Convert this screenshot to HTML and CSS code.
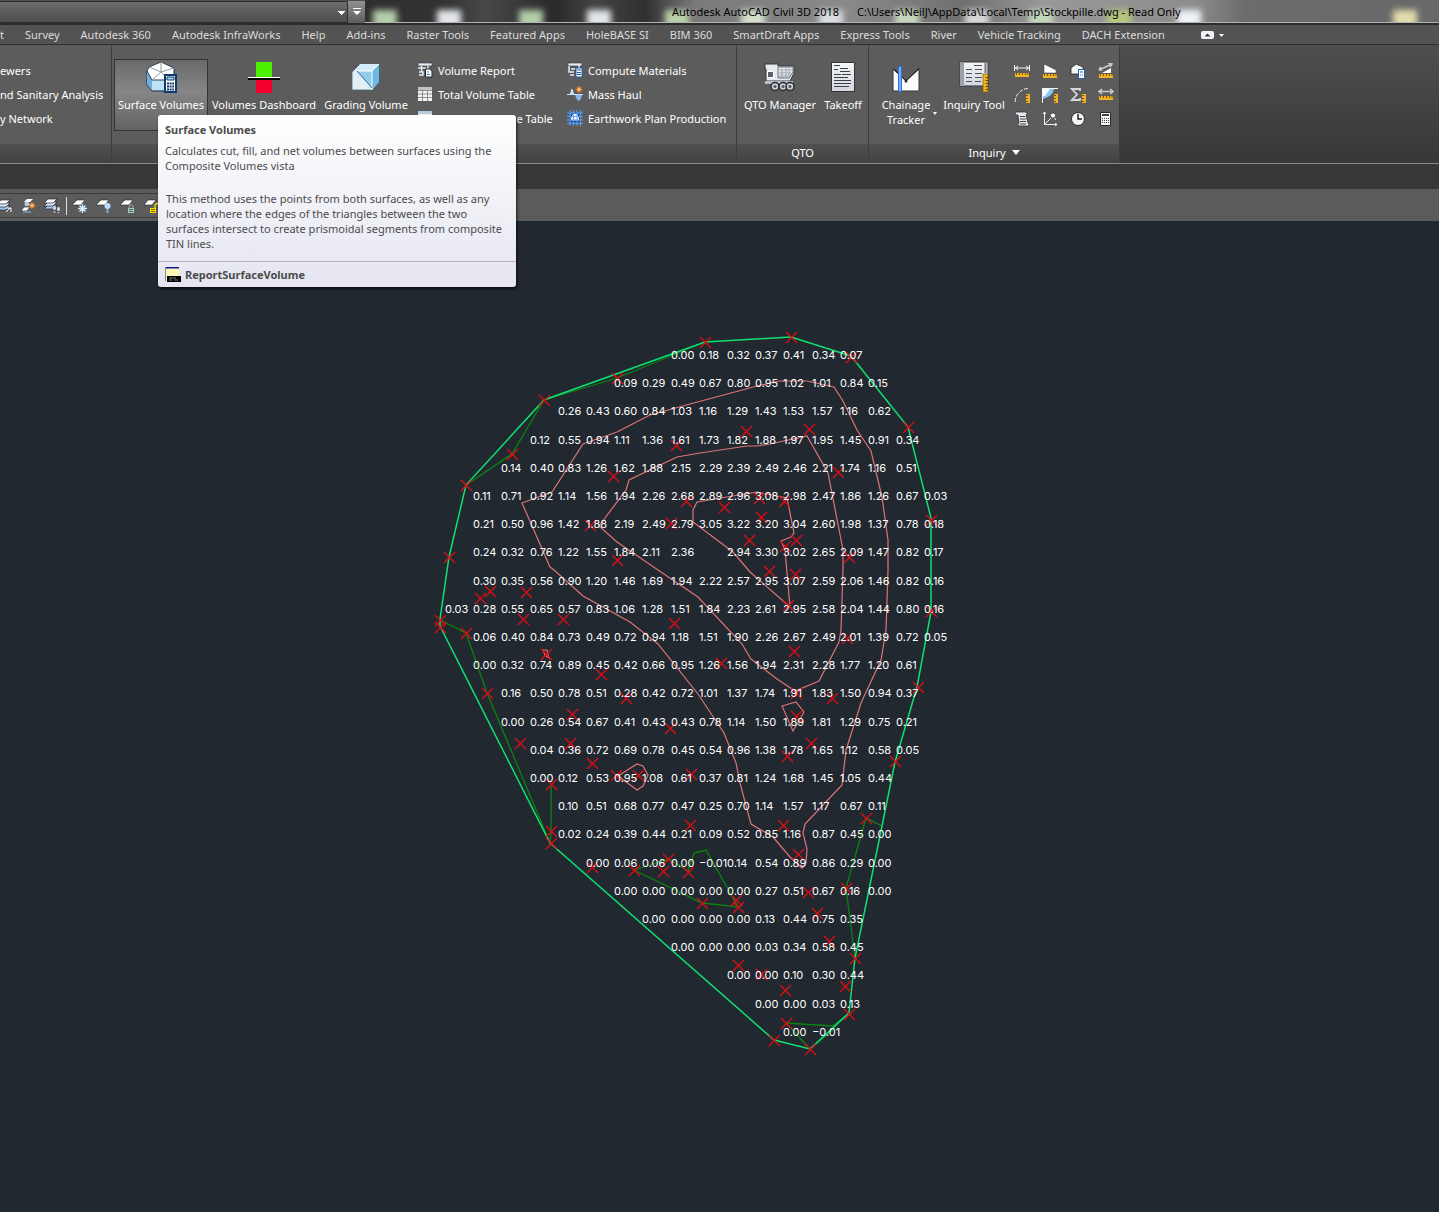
FILE: index.html
```html
<!DOCTYPE html>
<html lang="en">
<head>
  <meta charset="UTF-8" />
  <meta name="viewport" content="width=device-width, initial-scale=1.0"/>
  <title>Autodesk AutoCAD Civil 3D 2018</title>
  <link rel="stylesheet" href="styles.css">
</head>
<body>

  <svg class="defs" aria-hidden="true">
    <defs>
      <linearGradient id="paper" x1="0" y1="0" x2="0" y2="1">
        <stop offset="0" stop-color="#f4f5f7"/><stop offset="1" stop-color="#d2d6dc"/>
      </linearGradient>
      <linearGradient id="ice" x1="0" y1="0" x2="1" y2="1">
        <stop offset="0" stop-color="#e9f6fc"/><stop offset="1" stop-color="#6db7de"/>
      </linearGradient>
      <symbol id="ruler" viewBox="0 0 14 4">
        <path d="M0 0h14v4H0z" fill="#f0b323"/>
        <path d="M1.5 0v2M4.5 0v2M7.5 0v2M10.5 0v2M13 0v2" stroke="#7a5200"/>
      </symbol>
      <symbol id="ruler-v" viewBox="0 0 4 9">
        <path d="M0 0h4v9H0z" fill="#f0b323"/>
        <path d="M0 1.5h2M0 4.5h2M0 7.5h2" stroke="#7a5200"/>
      </symbol>
      <symbol id="layers" viewBox="0 0 16 16">
        <path d="M5 8h9l-4 4H1z" fill="#9cc4f5" stroke="#1c2738" stroke-width=".7"/>
        <path d="M5 5h9l-4 4H1z" fill="#dfe6ef" stroke="#1c2738" stroke-width=".7"/>
        <path d="M5 2h9l-4 4H1z" fill="#fff" stroke="#1c2738" stroke-width=".7"/>
      </symbol>
    </defs>
  </svg>

  <header class="titlebar">
    <select class="workspace" aria-label="Workspace"></select>
    <button class="customize" aria-label="Customize">
      <svg width="10" height="10" viewBox="0 0 10 10"><path d="M1 1.5h8" stroke="#fff"/><path d="M1 4h8L5 8z" fill="#fff"/></svg>
    </button>
    <div class="glass">
      <svg class="reflections" aria-hidden="true">
        <g id="blobs"></g>
      </svg>
      <div class="caption"><span>Autodesk AutoCAD Civil 3D 2018</span><span>C:\Users\NeilJ\AppData\Local\Temp\Stockpille.dwg - Read Only</span></div>
    </div>
  </header>

  <nav class="tabs">
    <a href="#" class="cut">t</a>
    <a href="#">Survey</a>
    <a href="#">Autodesk 360</a>
    <a href="#">Autodesk InfraWorks</a>
    <a href="#">Help</a>
    <a href="#">Add-ins</a>
    <a href="#">Raster Tools</a>
    <a href="#">Featured Apps</a>
    <a href="#">HoleBASE SI</a>
    <a href="#">BIM 360</a>
    <a href="#">SmartDraft Apps</a>
    <a href="#">Express Tools</a>
    <a href="#">River</a>
    <a href="#">Vehicle Tracking</a>
    <a href="#">DACH Extension</a>
    <button class="minimize" aria-label="Minimize ribbon">
      <svg width="26" height="10" viewBox="0 0 26 10">
        <rect x="1" y="1" width="13" height="8" rx="2" fill="#f2f4fa"/>
        <path d="M4.5 6.5h6l-3-3z" fill="#333"/>
        <path d="M19 4h5l-2.5 3z" fill="#fff"/>
      </svg>
    </button>
  </nav>

  <section class="ribbon">
    <div class="panel panel-first">
      <div class="panel-body">
        <div class="rows">
          <button class="row">ewers</button>
          <button class="row">nd Sanitary Analysis</button>
          <button class="row">y Network</button>
        </div>
      </div>
      <div class="panel-title"></div>
    </div>

    <div class="panel panel-volumes">
      <div class="panel-body">
        <button class="big active">
          <svg width="32" height="32" viewBox="0 0 32 32">
            <path d="M2 10v14l5 6h17l5-5V9z" fill="url(#ice)" stroke="#1c3350"/>
            <path d="M7 19h17v10H7z" fill="#bfe2f4"/>
            <path d="M2 10v13l5 6V19z" fill="#6eb0da"/>
            <path d="M2 10l2-4 12-5 13 6v9l-5 3H7z" fill="#fff" stroke="#29415f"/>
            <path d="M16 11L4 6M16 11L7 19M16 11l8 8M16 11l13-4M16 11V1" stroke="#999" fill="none"/>
            <path d="M20 14h11v17H20z" fill="#fff" stroke="#123a6b" stroke-width="2"/>
            <path d="M22 16h7v3h-7z" fill="#a8d8f0" stroke="#123a6b"/>
            <path d="M22 22.5h7M22 25.5h7M22 28.5h7" stroke="#123a6b" stroke-width="2" stroke-dasharray="2 .6"/>
          </svg>
          <span>Surface Volumes</span>
        </button>
        <button class="big wide">
          <svg width="32" height="32" viewBox="0 0 32 32">
            <path d="M8 1h16v15H8z" fill="#4df000"/>
            <path d="M8 19h16v13H8z" fill="#f4002c"/>
            <path d="M0 16h32v1H0z" fill="#fff"/>
            <path d="M0 17h32v2H0z" fill="#000"/>
          </svg>
          <span>Volumes Dashboard</span>
        </button>
        <button class="big">
          <svg width="32" height="32" viewBox="0 0 32 32">
            <path d="M2 11l8-8h19v18l-7 8H2z" fill="#e2eef5" stroke="#46667c" stroke-width=".8"/>
            <path d="M10 3h19l-7 7H7z" fill="#d3edfa"/>
            <path d="M22 10l7-7v18l-7 8z" fill="#69b9e2"/>
            <path d="M7 10h15v17z" fill="#90cdee"/>
            <path d="M7 10h15v19M22 10l7-7" stroke="#fff" fill="none"/>
            <path d="M7 10l15 17" stroke="#386b8e" fill="none"/>
          </svg>
          <span>Grading Volume</span>
        </button>
        <div class="rows reports">
          <button class="row">
            <svg width="16" height="16" viewBox="0 0 16 16">
              <path d="M1 1h14v3H1z" fill="#e8ebf0" stroke="#1d2b3c" stroke-width=".6"/>
              <path d="M1 6h8M4.5 4v6M2 10h4v3H2M11 4v3" stroke="#e8ebf0" stroke-width="1.5" fill="none"/>
              <path d="M8.5 7h4l2.500 2v6H8.5z" fill="#fff" stroke="#1d2b3c"/>
              <path d="M10 10h2M10 12.5h3" stroke="#3b74b8"/>
            </svg>
            <span>Volume Report</span>
          </button>
          <button class="row">
            <svg width="16" height="16" viewBox="0 0 16 16">
              <path d="M1 1h14v14H1z" fill="#f3f3f3"/><path d="M1 1h14v3H1z" fill="#bfc3ca"/>
              <path d="M1 4.5h14M1 8h14M1 11.5h14M5.5 4v11M10.5 4v11" stroke="#777" stroke-width=".8"/>
            </svg>
            <span>Total Volume Table</span>
          </button>
          <button class="row">
            <svg width="16" height="16" viewBox="0 0 16 16">
              <path d="M1 1h14v14H1z" fill="#f3f3f3"/><path d="M1 1h14v3H1z" fill="#b5cbdc"/>
            </svg>
            <span>Material Volume Table</span>
          </button>
        </div>
        <div class="rows materials">
          <button class="row">
            <svg width="16" height="16" viewBox="0 0 16 16">
              <path d="M1 1h14v3H1z" fill="#e8ebf0" stroke="#1d2b3c" stroke-width=".6"/>
              <path d="M2 4v6h5M4 7h4M3 13h4M12 3v3" stroke="#e8ebf0" stroke-width="1.5" fill="none"/>
              <path d="M9 6h6v9H9z" fill="#fff" stroke="#1f5ea8"/>
              <path d="M10 8h4M10 10.5h4M10 12.5h4" stroke="#1f5ea8"/>
            </svg>
            <span>Compute Materials</span>
          </button>
          <button class="row">
            <svg width="16" height="16" viewBox="0 0 16 16">
              <path d="M1 9q3-1 3-5 1-2 2 0 0 4 3 5z" fill="#d3e2f5"/>
              <path d="M8 9h7q-1 5-3 6-2 0-4-6z" fill="#8db4e6"/>
              <path d="M0 8.5h16" stroke="#cfe0f5"/>
              <path d="M12 0v7M8.5 3.5h7M9.5 1l5 5M14.5 1l-5 5" stroke="#ff7a1a"/>
              <circle cx="12" cy="3.5" r="2" fill="#ffb14d"/>
            </svg>
            <span>Mass Haul</span>
          </button>
          <button class="row">
            <svg width="16" height="16" viewBox="0 0 16 16">
              <path d="M2 2h12v12H2z" fill="#2c6fc4"/>
              <path d="M3 11q1-8 5-8t5 8z" fill="#f4f8ff" stroke="#0f2950"/>
              <path d="M3 0v16M6.5 0v16M10 0v16M13.5 0v16M0 3h16M0 6.5h16M0 10h16M0 13.5h16" stroke="#5d9ff0" stroke-width=".9"/>
            </svg>
            <span>Earthwork Plan Production</span>
          </button>
        </div>
      </div>
      <div class="panel-title"></div>
    </div>

    <div class="panel panel-qto">
      <div class="panel-body">
        <button class="big qto">
          <svg width="32" height="32" viewBox="0 0 32 32">
            <path d="M1 3h13v2h16v7l-4 8H2V8H1z" fill="#e6e9ee" stroke="#32363d"/>
            <path d="M3.5 10.5h6v6h-6z" fill="#59626e" stroke="#fff"/>
            <path d="M14 6h15v5l-4 6H14z" fill="url(#paper)" stroke="#6a707a"/>
            <path d="M15 9h13M15 12h12M15 15h10M18 7v9M22 7v9M25 7v8" stroke="#8b929d" stroke-width=".7"/>
            <path d="M1 20h28v3H1z" fill="#b7bdc6"/>
            <g fill="#c9ced6" stroke="#25282d" stroke-width="1.5"><circle cx="11" cy="25.5" r="4"/><circle cx="19" cy="25.5" r="4"/><circle cx="26" cy="25.5" r="4"/></g>
            <g fill="#555"><circle cx="11" cy="25.5" r="1.5"/><circle cx="19" cy="25.5" r="1.5"/><circle cx="26" cy="25.5" r="1.5"/></g>
          </svg>
          <span>QTO Manager</span>
        </button>
        <button class="big takeoff">
          <svg width="32" height="32" viewBox="0 0 32 32">
            <path d="M4.5 1.5h23v29h-23z" fill="url(#paper)" stroke="#30343a"/>
            <path d="M7 4.5h6M7 8.5h4M13 7.5h8M13 10.5h10M7 13.5h7M15 13.5h9M7 16.5h14M7 19.5h17M7 22.5h17M7 25.5h15" stroke="#3b4047"/>
          </svg>
          <span>Takeoff</span>
        </button>
      </div>
      <div class="panel-title">QTO</div>
    </div>

    <div class="panel panel-inquiry">
      <div class="panel-body">
        <button class="big chainage">
          <svg width="32" height="32" viewBox="0 0 32 32">
            <path d="M3 30V8l13 12L29 7v23z" fill="#fbfbfb" stroke="#31353b"/>
            <path d="M4 8l5 5M12 16l4 4L29 8" stroke="#1a1a1a" fill="none"/>
            <circle cx="16" cy="20" r="1.5" fill="#222"/>
            <path d="M8 5h4v26H8z" fill="#2a70e0"/><path d="M9.5 6h1v24h-1z" fill="#d8e8ff"/>
          </svg>
          <span>Chainage<br>Tracker</span>
          <i class="drop"></i>
        </button>
        <button class="big inquiry">
          <svg width="32" height="32" viewBox="0 0 32 32">
            <path d="M2 1h28v24H2z" fill="url(#paper)" stroke="#30343a"/>
            <path d="M2 1h4v24H2z" fill="#9ba1aa"/>
            <path d="M27.5 2v10" stroke="#777" stroke-width="2"/>
            <path d="M16 4.5h8M8 8.5h6M17 8.5h7M8 12.5h6M17 12.5h7M8 16.5h6M17 16.5h7M8 20.5h6M17 20.5h6" stroke="#4d525a" stroke-width="1.2"/>
            <path d="M25 13h5v18h-5z" fill="#f0b323" stroke="#6e4b00" stroke-width=".6"/>
            <path d="M27.5 16.5H30M27.5 19.5H30M27.5 22.5H30M27.5 25.5H30M27.5 28.5H30" stroke="#6e4b00"/>
          </svg>
          <span>Inquiry Tool</span>
        </button>
        <div class="tools">
          <button aria-label="Distance"><svg width="16" height="16" viewBox="0 0 16 16"><path d="M.5 2v6M15.5 2v6M1 5h14M4 3L1.5 5 4 7M12 3l2.5 2L12 7" stroke="#f5f5f5" fill="none"/><use href="#ruler" x="1" y="10" width="14" height="4"/></svg></button>
          <button aria-label="Area"><svg width="16" height="16" viewBox="0 0 16 16"><path d="M2 1l12 6v3H2z" fill="#fff" stroke="#333" stroke-width=".5"/><use href="#ruler" x="1" y="11" width="14" height="4"/></svg></button>
          <button aria-label="Mass properties"><svg width="16" height="16" viewBox="0 0 16 16"><path d="M1 5l5-4 7 3v7H1z" fill="#f4f5f7" stroke="#222" stroke-width=".8"/><path d="M8.5 6.5h6v9h-6z" fill="#fff" stroke="#1f5ea8"/><path d="M10 9h3M10 12h1M12 12h1" stroke="#1f5ea8"/></svg></button>
          <button aria-label="Slope"><svg width="16" height="16" viewBox="0 0 16 16"><path d="M1 7l13-6M10 0l4 1-2 3M1 7l2-3M1 7h3" stroke="#c7ccd3" stroke-width="1.5" fill="none"/><path d="M4 10l9-5v5z" fill="#fff"/><use href="#ruler" x="1" y="11" width="14" height="4"/></svg></button>
          <button aria-label="Arc length"><svg width="16" height="16" viewBox="0 0 16 16"><path d="M1 15Q2 3 15 1" stroke="#f1f1f1" stroke-dasharray="4 1.5" fill="none"/><use href="#ruler-v" x="12" y="7" width="4" height="9"/></svg></button>
          <button aria-label="Angle"><svg width="16" height="16" viewBox="0 0 16 16"><path d="M.5 1v15M0 1.5h16" stroke="#f1f1f1"/><path d="M1 2h11q-1 7-11 10z" fill="#8ac6ef"/><path d="M1 2h7L3 9H1z" fill="#f4faff"/><use href="#ruler-v" x="12" y="7" width="4" height="9"/></svg></button>
          <button aria-label="Sum"><svg width="16" height="16" viewBox="0 0 16 16"><path d="M10 4V2H2l5 5.5L2 13h8v-2" stroke="#d5d9df" stroke-width="1.8" fill="none"/><use href="#ruler-v" x="12" y="7" width="4" height="9"/></svg></button>
          <button aria-label="Width"><svg width="16" height="16" viewBox="0 0 16 16"><path d="M1 4.5h14M4 2L1 4.5 4 7M12 2l3 2.5L12 7" stroke="#c7ccd3" stroke-width="1.5" fill="none"/><use href="#ruler" x="1" y="9" width="14" height="4"/></svg></button>
          <button aria-label="List"><svg width="16" height="16" viewBox="0 0 16 16"><path d="M2 1h10q2 1 0 3l2 8q2 1 0 3H5q-2-1 0-3L4 4H2q-2-2 0-3z" fill="#e8eaee" stroke="#2c3036" stroke-width=".8"/><path d="M6 5.5h5M6 8h6M6 10.5h6M6 13h6" stroke="#3b4047"/></svg></button>
          <button aria-label="Locate point"><svg width="16" height="16" viewBox="0 0 16 16"><path d="M2.5 1v12.5H15M1 3l1.5-2L4 3M13 12l2 1.5-2 1.5M3 13l8-8 3 4" stroke="#f1f1f1" fill="none"/><circle cx="11" cy="4.5" r="2.5" fill="#fff" stroke="#222" stroke-width=".6"/></svg></button>
          <button aria-label="Time"><svg width="16" height="16" viewBox="0 0 16 16"><circle cx="8" cy="8" r="6.5" fill="#f5f6f8" stroke="#26292e"/><path d="M8 3v5h4" stroke="#222" stroke-width="1.5" fill="none"/></svg></button>
          <button aria-label="Calculator"><svg width="16" height="16" viewBox="0 0 16 16"><path d="M2.5 1.5h10v13h-10z" fill="#f5f6f8" stroke="#26292e"/><path d="M4 3h7v2H4z" fill="#444"/><path d="M4 7.5h7M4 9.5h7M4 11.5h7" stroke="#444" stroke-dasharray="1 1"/></svg></button>
        </div>
      </div>
      <div class="panel-title">Inquiry <i class="drop big-drop"></i></div>
    </div>
  </section>

  <div class="strip"></div>

  <div class="toolbar">
    <div class="toolset">
      <button aria-label="Layer match"><svg width="16" height="16" viewBox="0 0 16 16"><use href="#layers"/><path d="M10 14l4-4M11 10h4v4" stroke="#fff" fill="none"/></svg></button>
      <button aria-label="Layer previous"><svg width="16" height="16" viewBox="0 0 16 16"><path d="M7 1h6l-3 3H4z" fill="#fff"/><circle cx="7" cy="6" r="2.5" fill="#a8cdf2"/><path d="M4 9h6l-3 4H1z" fill="#fff" stroke="#222" stroke-width=".6"/><path d="M3 14h8" stroke="#8fb8ea"/><path d="M12 4v7M8.5 7.5h7M9.5 5l5 5M14.5 5l-5 5" stroke="#f47a1c"/><circle cx="12" cy="7.5" r="2" fill="#ffb25a"/></svg></button>
      <button aria-label="Layer walk"><svg width="16" height="16" viewBox="0 0 16 16"><use href="#layers" x="-1" y="-1"/><path d="M9 8h3v4H9zM13 9h3v4h-3zM9.5 13h2v2h-2zM13.5 14h2v1.5h-2z" fill="#e6ebf2" stroke="#333" stroke-width=".4"/></svg></button>
      <i class="divider"></i>
      <button aria-label="Layer freeze"><svg width="16" height="16" viewBox="0 0 16 16"><path d="M5 2h8L9 7H0z" fill="#fff" stroke="#222" stroke-width=".6"/><path d="M10.5 6v9M6 10.5h9M7.5 7.5l6 6M13.5 7.5l-6 6" stroke="#d9efff" stroke-width="1.3"/></svg></button>
      <button aria-label="Layer off"><svg width="16" height="16" viewBox="0 0 16 16"><path d="M5 2h8L9 7H0z" fill="#fff" stroke="#222" stroke-width=".6"/><circle cx="11.5" cy="8" r="3" fill="#b8dcff"/><path d="M10.5 11h2v4h-2z" fill="#8ba6c4"/></svg></button>
      <button aria-label="Layer lock"><svg width="16" height="16" viewBox="0 0 16 16"><path d="M5 2h8L9 7H0z" fill="#fff" stroke="#222" stroke-width=".6"/><path d="M9 10V8q2-3 4 0v2" stroke="#8fb3a4" fill="none"/><path d="M8 10h6v5H8z" fill="#a8c8ba"/><path d="M9 11.5h4M9 13.5h4" stroke="#4a675b"/></svg></button>
      <button aria-label="Layer unlock"><svg width="16" height="16" viewBox="0 0 16 16"><path d="M4 2h8L8 7H0z" fill="#fff" stroke="#222" stroke-width=".6"/><path d="M11 10V7q2-3 4 0v1" stroke="#ffe000" stroke-width="1.3" fill="none"/><path d="M6 10h6v5H6z" fill="#ffe000"/><path d="M7 11.5h4M7 13.5h4" stroke="#7a6500"/></svg></button>
    </div>
  </div>

  <main class="canvas">
    <svg id="drawing" viewBox="0 221 1439 991" preserveAspectRatio="xMidYMin meet">
      <g class="zero">
        <polyline points="544,400 617,378 705,342"/>
        <polyline points="544,400 512,454 466,485"/>
        <polyline points="440,620 466,633 487,693 550,843"/>
        <polyline points="551,784 551,832 550,843"/>
        <polyline points="882,826 866,818 846,888 855,958"/>
        <polygon points="634,870 669,859 688,871 694,853 706,850 738,907 702,903"/>
        <polyline points="849,1013 833,1026 786,1023 810,1049 835,1028"/>
      </g>
      <g class="contour">
        <polygon points="522,503 552,492 583,444 617,432 650,415 690,404 757,386 780,381 807,381 834,387 843,401 857,430 871,451 882,497 888,540 888,570 886,630 881,660 861,703 846,750 842,785 805,824 803,833 807,849 806,863 802,868 790,857 773,837 751,824 740,783 736,763 724,733 698,694 658,644 630,622 583,596 554,570 550,567"/>
        <polygon points="599,526 626,490 629,480 677,457 700,453 747,446 757,446 770,444 807,436 828,473 843,550 843,570 841,630 839,642 819,681 795,691 777,679 751,659 742,644 698,597 658,570 617,542"/>
        <polygon points="693,522 693,510 697,502 757,492 787,498 794,533 791,537 781,541 785,550 790,607 750,572 733,552"/>
        <polygon points="782,706 796,702 804,712 793,731"/>
        <polygon points="618,776 637,764 643,766 648,775 643,786 637,790"/>
        <polygon points="543,650 547,650 549,658 545,655"/>
      </g>
      <polygon class="boundary" points="705,342 791,337 851,356 908,427 931,518 931,612 917,687 895,762 882,826 855,958 849,1013 810,1049 774,1040 550,843 440,626 440,619 449,557 466,485 544,400"/>
      <g id="points" class="point"></g>
      <g id="labels" class="level"></g>
    </svg>
  </main>

  <div class="tooltip" role="tooltip">
    <h2>Surface Volumes</h2>
    <p>Calculates cut, fill, and net volumes between surfaces using the<br>Composite Volumes vista</p>
    <p class="detail">This method uses the points from both surfaces, as well as any<br>location where the edges of the triangles between the two<br>surfaces intersect to create prismoidal segments from composite<br>TIN lines.</p>
    <div class="command">
      <svg width="16" height="16" viewBox="0 0 16 16">
        <path d="M0 0h14v14H0z" fill="#fbf7b5"/><path d="M0 0h14v1.5H0z" fill="#16169a"/>
        <path d="M.5 0v14" stroke="#888"/><path d="M2 9h14v6H2z" fill="#000"/>
        <path d="M4 11h7M4 13h3M9 13h4" stroke="#999" stroke-width=".8"/>
      </svg>
      <span>ReportSurfaceVolume</span>
    </div>
  </div>

  <script>
    const svgNS = 'http://www.w3.org/2000/svg';
    const gridX = 445;
    const gridY = 359;
    const gridStep = 28.2;

    // [first column, levels]
    const rows = [
      [8, '0.00 0.18 0.32 0.37 0.41 0.34 0.07'],
      [6, '0.09 0.29 0.49 0.67 0.80 0.95 1.02 1.01 0.84 0.15'],
      [4, '0.26 0.43 0.60 0.84 1.03 1.16 1.29 1.43 1.53 1.57 1.16 0.62'],
      [3, '0.12 0.55 0.94 1.11 1.36 1.61 1.73 1.82 1.88 1.97 1.95 1.45 0.91 0.34'],
      [2, '0.14 0.40 0.83 1.26 1.62 1.88 2.15 2.29 2.39 2.49 2.46 2.21 1.74 1.16 0.51'],
      [1, '0.11 0.71 0.92 1.14 1.56 1.94 2.26 2.68 2.89 2.96 3.08 2.98 2.47 1.86 1.26 0.67 0.03'],
      [1, '0.21 0.50 0.96 1.42 1.88 2.19 2.49 2.79 3.05 3.22 3.20 3.04 2.60 1.98 1.37 0.78 0.18'],
      [1, '0.24 0.32 0.76 1.22 1.55 1.84 2.11 2.36 . 2.94 3.30 3.02 2.65 2.09 1.47 0.82 0.17'],
      [1, '0.30 0.35 0.56 0.90 1.20 1.46 1.69 1.94 2.22 2.57 2.95 3.07 2.59 2.06 1.46 0.82 0.16'],
      [0, '0.03 0.28 0.55 0.65 0.57 0.83 1.06 1.28 1.51 1.84 2.23 2.61 2.95 2.58 2.04 1.44 0.80 0.16'],
      [1, '0.06 0.40 0.84 0.73 0.49 0.72 0.94 1.18 1.51 1.90 2.26 2.67 2.49 2.01 1.39 0.72 0.05'],
      [1, '0.00 0.32 0.74 0.89 0.45 0.42 0.66 0.95 1.26 1.56 1.94 2.31 2.28 1.77 1.20 0.61'],
      [2, '0.16 0.50 0.78 0.51 0.28 0.42 0.72 1.01 1.37 1.74 1.91 1.83 1.50 0.94 0.37'],
      [2, '0.00 0.26 0.54 0.67 0.41 0.43 0.43 0.78 1.14 1.50 1.89 1.81 1.29 0.75 0.21'],
      [3, '0.04 0.36 0.72 0.69 0.78 0.45 0.54 0.96 1.38 1.78 1.65 1.12 0.58 0.05'],
      [3, '0.00 0.12 0.53 0.95 1.08 0.61 0.37 0.81 1.24 1.68 1.45 1.05 0.44'],
      [4, '0.10 0.51 0.68 0.77 0.47 0.25 0.70 1.14 1.57 1.17 0.67 0.11'],
      [4, '0.02 0.24 0.39 0.44 0.21 0.09 0.52 0.85 1.16 0.87 0.45 0.00'],
      [5, '0.00 0.06 0.06 0.00 −0.01 0.14 0.54 0.89 0.86 0.29 0.00'],
      [6, '0.00 0.00 0.00 0.00 0.00 0.27 0.51 0.67 0.16 0.00'],
      [7, '0.00 0.00 0.00 0.00 0.13 0.44 0.75 0.35'],
      [8, '0.00 0.00 0.00 0.03 0.34 0.58 0.45'],
      [10, '0.00 0.00 0.10 0.30 0.44'],
      [11, '0.00 0.00 0.03 0.13'],
      [12, '0.00 −0.01']
    ];

    const points = [
      [705, 342], [791, 337], [851, 357], [617, 378], [544, 400], [908, 427], [676, 445], [746, 431], [809, 429],
      [512, 454], [838, 472], [613, 476], [466, 485], [686, 501], [724, 507], [759, 498], [784, 501], [761, 517],
      [931, 520], [590, 525], [671, 523], [749, 540], [796, 540], [785, 546], [449, 557], [617, 560], [849, 557],
      [769, 571], [795, 574], [490, 591], [526, 592], [480, 598], [788, 605], [931, 611], [523, 619], [563, 619],
      [674, 623], [440, 620], [440, 627], [466, 633], [847, 638], [794, 651], [546, 654], [721, 663], [601, 674],
      [918, 687], [487, 693], [796, 693], [626, 698], [832, 698], [572, 714], [796, 716], [670, 728], [520, 743],
      [570, 743], [811, 743], [787, 756], [592, 763], [895, 761], [616, 775], [638, 775], [691, 774], [551, 784],
      [866, 818], [690, 825], [783, 825], [551, 831], [551, 843], [798, 854], [668, 859], [592, 867], [634, 870],
      [663, 871], [688, 872], [846, 888], [808, 892], [702, 903], [736, 900], [738, 907], [817, 913], [829, 941],
      [855, 958], [738, 965], [761, 974], [785, 990], [845, 986], [849, 1014], [786, 1023], [774, 1040], [810, 1049]
    ];

    // blurred window reflections in the title bar: [x, color]
    const blobs = [
      [8, '#b4cdaa'], [72, '#e4e7ea'], [154, '#b4cdaa'], [222, '#e4e7ea'], [300, '#b9d0ab'],
      [376, '#d3e0cd'], [454, '#d9dce0'], [530, '#c5d7bb'], [600, '#d5d5d5'], [664, '#c5d7bb'],
      [742, '#b5c77a'], [812, '#eff3f8'], [1028, '#e3ddae']
    ];

    function add(parent, tag, attrs, text) {
      const el = document.createElementNS(svgNS, tag);
      for (const key in attrs) {
        el.setAttribute(key, attrs[key]);
      }
      if (text) el.textContent = text;
      document.getElementById(parent).appendChild(el);
    }

    rows.forEach(([first, levels], r) => {
      levels.split(' ').forEach((level, i) => {
        if (level === '.') return;
        add('labels', 'text', {
          x: Math.round(gridX + (first + i) * gridStep),
          y: Math.round(gridY + r * gridStep)
        }, level);
      });
    });

    points.forEach(([x, y]) => {
      add('points', 'path', { d: `M${x - 5} ${y - 5}l11 11m0 -11l-11 11` });
    });

    blobs.forEach(([x, color]) => {
      add('blobs', 'rect', { x: x, y: 10, width: 24, height: 18, fill: color });
    });
  </script>

</body>
</html>
```
FILE: styles.css
```css
* {
  box-sizing: border-box;
}

body {
  margin: 0;
  min-height: 100vh;
  display: flex;
  flex-direction: column;
  position: relative;
  overflow-x: hidden;
  font-family: "Noto Sans", "Open Sans", sans-serif;
  font-size: 11px;
  line-height: 15px;
  color: #fff;
  background: #212830;
}

button {
  padding: 0;
  border: none;
  background: none;
  font: inherit;
  color: inherit;
  white-space: nowrap;
}

svg {
  display: block;
  flex: none;
}

.defs {
  position: absolute;
  width: 0;
  height: 0;
}

/* title bar */
.titlebar {
  display: flex;
  height: 25px;
  background: #4f4f4f;
  border-bottom: 2px solid #2b2b2b;
}

.workspace {
  width: 348px;
  height: 22px;
  margin-top: 1px;
  border: 1px solid #2e2e2e;
  border-left: none;
  appearance: none;
  background:
    linear-gradient(to bottom right, #fff 50%, transparent 50%) 342px 9px / 4px 4px no-repeat,
    linear-gradient(to bottom left, #fff 50%, transparent 50%) 338px 9px / 4px 4px no-repeat,
    linear-gradient(#6e6e6e, #4c4c4c);
}

.customize {
  width: 17px;
  height: 22px;
  margin-top: 1px;
  display: flex;
  align-items: center;
  justify-content: center;
  background: linear-gradient(#909090, #5e5e5e);
}

.glass {
  flex: 1;
  position: relative;
  overflow: hidden;
  border-bottom: 1px solid #b5b5b5;
  background:
    linear-gradient(90deg, #2e2e2e 0, #333 80px, #484848 120px, #2a2a2a 190px, #444 230px, #2f2f2f 280px, #7a7a7a 330px, #8a8a8a 480px, #707070 600px, #999 680px, #8c8c8c 830px, #6c6c6c 880px, #686868 100%);
}

.reflections {
  position: absolute;
  top: 0;
  left: 0;
  width: 100%;
  height: 23px;
}

#blobs {
  filter: blur(3px);
}

.caption {
  position: relative;
  display: flex;
  gap: 18px;
  padding: 4px 0 0 307px;
  color: #000;
  white-space: nowrap;
}

/* tabs */
.tabs {
  display: flex;
  align-items: center;
  gap: 1px;
  height: 20px;
  background: #535353;
  border-bottom: 1px solid #2f2f2f;
}

.tabs a {
  padding: 0 10px;
  color: #dcdcdc;
  text-decoration: none;
  white-space: nowrap;
}

.tabs .cut {
  width: 14px;
  padding: 0;
}

.minimize {
  margin-left: 24px;
}

/* ribbon */
.ribbon {
  display: flex;
  height: 119px;
  background: linear-gradient(#4f4f4f, #373737);
  border-bottom: 1px solid #8a8a8a;
}

.panel {
  display: flex;
  flex-direction: column;
  flex: none;
  background: #5c5c5c;
  border-right: 1px solid #3c3c3c;
}

.panel-first {
  width: 112px;
}

.panel-volumes {
  width: 625px;
}

.panel-qto {
  width: 132px;
}

.panel-inquiry {
  width: 251px;
}

.panel-body {
  display: flex;
  flex: 1;
  padding-top: 14px;
}

.panel-volumes .panel-body {
  padding-left: 2px;
}

.panel-title {
  display: flex;
  align-items: center;
  justify-content: center;
  gap: 6px;
  height: 19px;
  padding-bottom: 2px;
  background: linear-gradient(#505050, #424242);
}

.big {
  display: flex;
  flex: none;
  flex-direction: column;
  align-items: center;
  gap: 4px;
  width: 92px;
  height: 72px;
  padding-top: 2px;
  position: relative;
}

.active {
  width: 94px;
  padding-top: 1px;
  border: 1px solid #333;
  background: linear-gradient(#6a6a6a, #868686 45%, #636363);
}

.wide {
  width: 112px;
}

.qto {
  width: 86px;
}

.takeoff {
  width: 40px;
}

.chainage {
  width: 74px;
}

.inquiry {
  width: 62px;
}

.drop {
  width: 0;
  height: 0;
  border: 2px solid transparent;
  border-top: 3px solid #fff;
  border-bottom: none;
}

.chainage .drop {
  position: absolute;
  right: 6px;
  top: 53px;
}

.big-drop {
  border-width: 5px 4px 0;
}

.rows {
  display: flex;
  flex-direction: column;
  align-items: flex-start;
  margin-top: -1px;
}

.row {
  display: flex;
  align-items: center;
  gap: 5px;
  height: 24px;
}

.reports {
  width: 150px;
  margin-left: 5px;
}

.tools {
  display: grid;
  grid-template-columns: repeat(3, 28px) 16px;
  grid-auto-rows: 24px;
  align-items: center;
  align-content: start;
  margin-left: 9px;
}

.strip {
  height: 25px;
  background: #373737;
}

.toolbar {
  height: 32px;
  padding-top: 4px;
  background: #5b5b5b;
}

.toolset {
  display: flex;
  align-items: center;
  gap: 8px;
  width: 180px;
  height: 25px;
  margin-left: -4px;
  border: 1px solid #3c3c3c;
  border-left: none;
}

.divider {
  width: 1px;
  height: 18px;
  margin: 0 -3px 0 -2px;
  background: #e0e0e0;
}

/* drawing */
.canvas {
  flex: 1;
}

#drawing {
  width: 100%;
}

.boundary,
.zero,
.contour,
.point {
  fill: none;
}

.boundary {
  stroke: #0fe070;
  stroke-width: 1.5;
}

.zero {
  stroke: #0b840f;
  stroke-width: 1.3;
}

.contour {
  stroke: #dc7478;
  stroke-width: 1.2;
}

.point {
  stroke: #e00c14;
  stroke-width: 1.3;
}

.level {
  fill: #fff;
  font-family: Inter, sans-serif;
  font-size: 11px;
}

/* tooltip */
.tooltip {
  position: absolute;
  top: 115px;
  left: 158px;
  width: 358px;
  border-radius: 3px;
  color: #4c4c4c;
  background: linear-gradient(#fff, #e4e5f0);
  box-shadow: 1px 2px 3px rgba(0, 0, 0, 0.7);
  white-space: nowrap;
}

.tooltip h2 {
  margin: 0;
  padding: 7px 7px 6px;
  font-size: 11px;
}

.tooltip p {
  margin: 0;
  padding: 0 7px;
}

.tooltip .detail {
  padding: 18px 8px 10px;
}

.command {
  display: flex;
  align-items: center;
  gap: 4px;
  height: 26px;
  padding: 0 7px;
  border-top: 1px solid #b9b4b0;
  font-weight: bold;
}
```
